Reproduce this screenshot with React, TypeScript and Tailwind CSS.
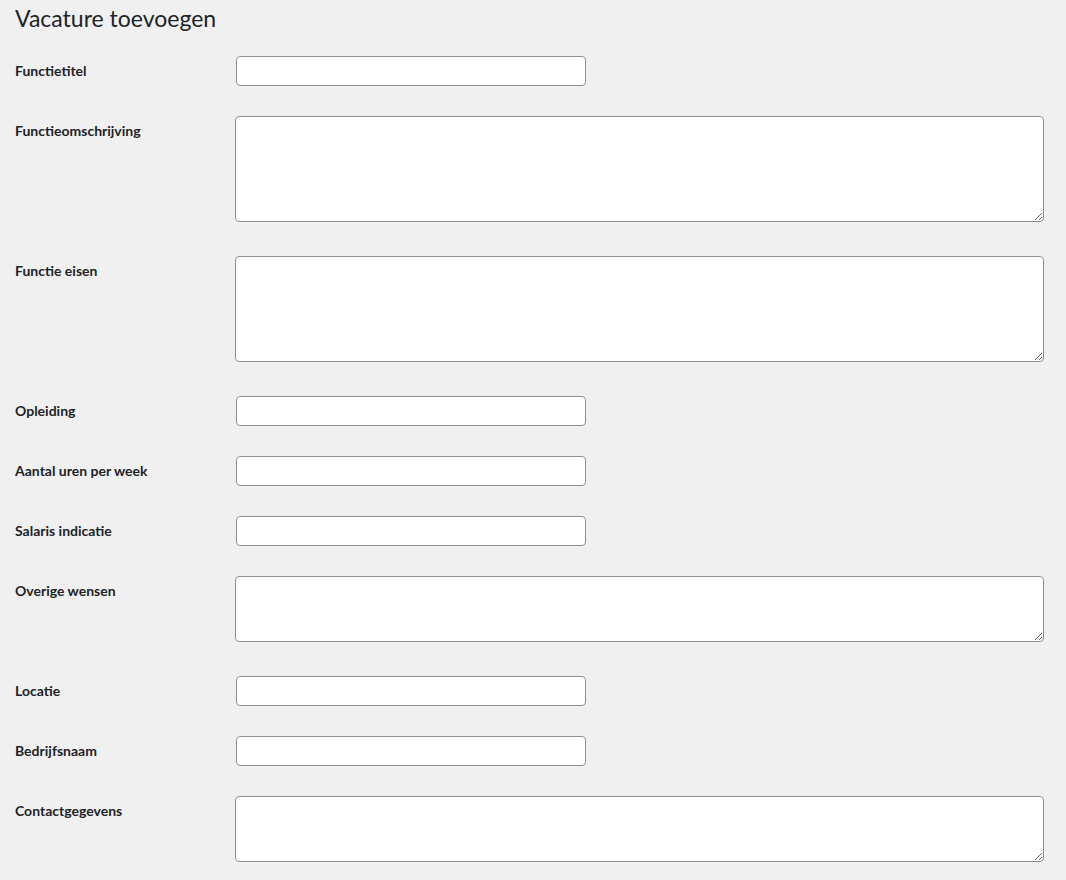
const fields: { label: string; type: "input" | "textarea"; rows?: number }[] = [
  { label: "Functietitel", type: "input" },
  { label: "Functieomschrijving", type: "textarea", rows: 5 },
  { label: "Functie eisen", type: "textarea", rows: 5 },
  { label: "Opleiding", type: "input" },
  { label: "Aantal uren per week", type: "input" },
  { label: "Salaris indicatie", type: "input" },
  { label: "Overige wensen", type: "textarea", rows: 3 },
  { label: "Locatie", type: "input" },
  { label: "Bedrijfsnaam", type: "input" },
  { label: "Contactgegevens", type: "textarea", rows: 3 },
];

const App = () => {
  return (
    <div
      className="min-h-[880px] bg-[#f0f0f1] text-[#1d2327] pl-[15px]"
      style={{ fontFamily: 'Lato, "Noto Sans", "Liberation Sans", sans-serif' }}
    >
      <h1 className="pt-[3px] mb-[8px] text-[23px] leading-[30px] font-normal">Vacature toevoegen</h1>
      <form>
        {fields.map((f) => (
          <div key={f.label} className="flex items-start py-[15px]">
            <label className="w-[220px] shrink-0 pt-[6px] text-[14px] leading-[18px] font-bold">
              {f.label}
            </label>
            {f.type === "input" ? (
              <input
                type="text"
                className="ml-px w-[350px] h-[30px] px-2 bg-white border border-[#8c8f94] rounded-[4px] text-[14px] outline-none"
              />
            ) : (
              <textarea
                className={
                  "block mb-[4px] w-[809px] bg-white border border-[#8c8f94] rounded-[4px] text-[14px] outline-none " +
                  (f.rows === 5 ? "h-[106px]" : "h-[66px]")
                }
              />
            )}
          </div>
        ))}
      </form>
    </div>
  );
};

export default App;
